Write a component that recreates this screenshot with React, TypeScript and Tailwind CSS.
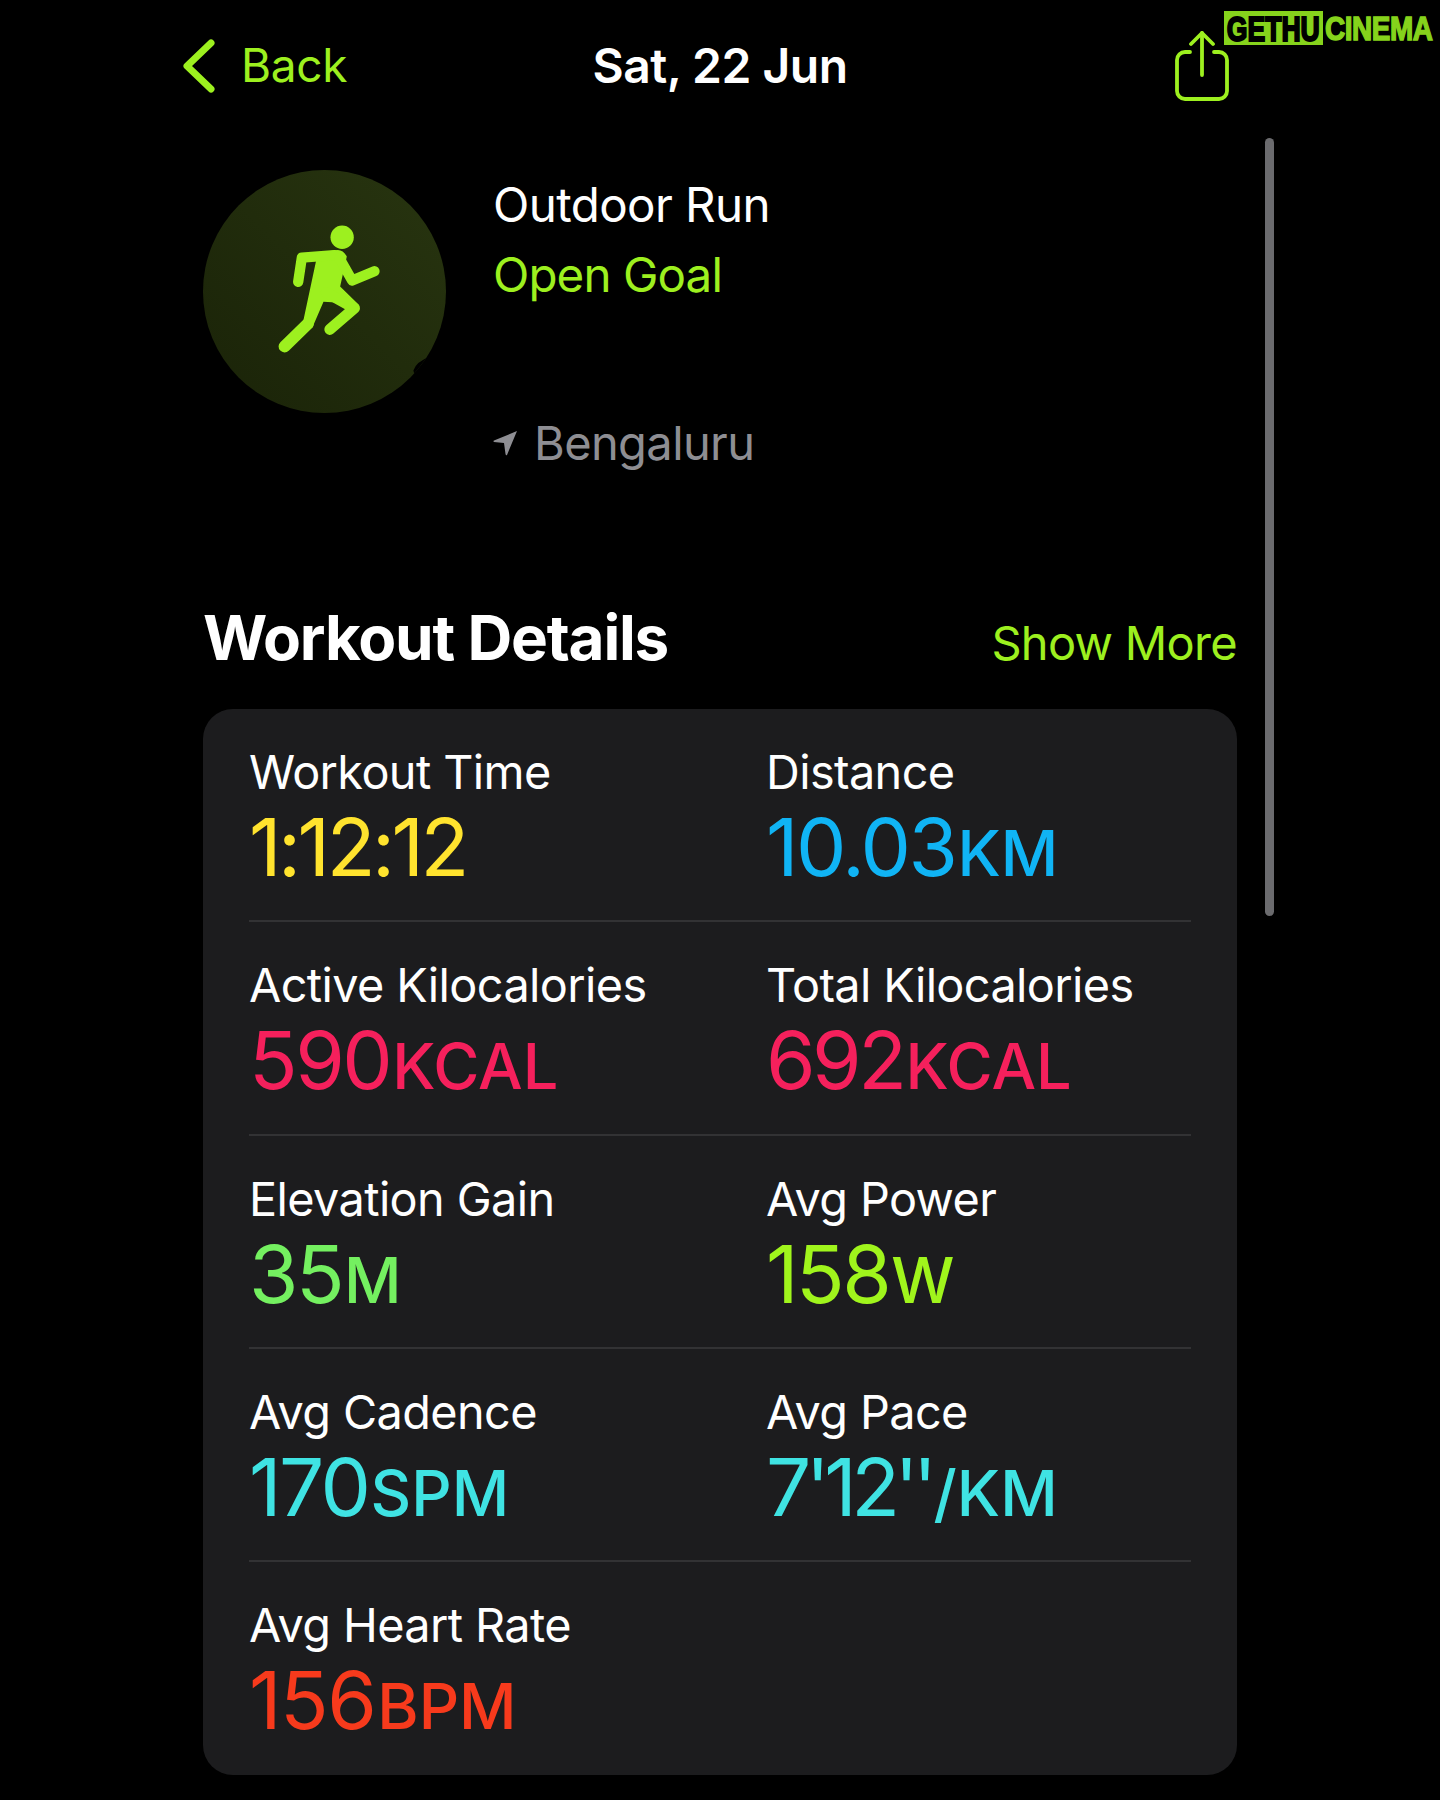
import React from 'react';

const LIME = '#9df01f';

interface Stat {
  label: string;
  value: string;
  unit?: string;
  color: string;
  tracking?: string;
}

const rows: Stat[][] = [
  [
    { label: 'Workout Time', value: '1:12:12', color: 'text-[#ffe32e]', tracking: 'tracking-[-3.5px]' },
    { label: 'Distance', value: '10.03', unit: 'KM', color: 'text-[#10b4f5]' },
  ],
  [
    { label: 'Active Kilocalories', value: '590', unit: 'KCAL', color: 'text-[#f5205c]' },
    { label: 'Total Kilocalories', value: '692', unit: 'KCAL', color: 'text-[#f5205c]', tracking: 'tracking-[-3.5px]' },
  ],
  [
    { label: 'Elevation Gain', value: '35', unit: 'M', color: 'text-[#74f060]' },
    { label: 'Avg Power', value: '158', unit: 'W', color: 'text-[#a0f51c]' },
  ],
  [
    { label: 'Avg Cadence', value: '170', unit: 'SPM', color: 'text-[#3fe3e3]' },
    { label: 'Avg Pace', value: "7'12''", unit: '/KM', color: 'text-[#3fe3e3]', tracking: 'tracking-[-5.5px]' },
  ],
  [{ label: 'Avg Heart Rate', value: '156', unit: 'BPM', color: 'text-[#f73a1c]', tracking: 'tracking-[-1.5px]' }],
];

function StatCell({ stat }: { stat: Stat }) {
  return (
    <div className="flex flex-col">
      <span className="text-[46.800px] leading-[54px] tracking-[-0.6px] text-white">{stat.label}</span>
      <span className={`mt-[5px] flex items-baseline leading-[86px] ${stat.color}`}>
        <span className={`text-[80px] font-normal ${stat.tracking ?? 'tracking-[-2.5px]'}`}>{stat.value}</span>
        {stat.unit && <span className="ml-[2px] text-[63px] font-medium tracking-[0px]">{stat.unit}</span>}
      </span>
    </div>
  );
}

function Runner() {
  return (
    <svg viewBox="40 30 730 730" className="h-full w-full">
      <path d="M672 632 Q680 606 722 590 L770 570 L770 700 L690 700 Z" fill="#000" />
      <circle cx="458" cy="232" r="35" fill={LIME} />
      <path d="M385 278 L445 270 Q462 270 472 290 L452 380 L505 432 L402 426 L368 505 L342 480 Z" fill={LIME} />
      <g fill="none" stroke={LIME} strokeLinecap="round" strokeLinejoin="round">
        <path d="M435 286 L337 293 L326 366" strokeWidth="31" />
        <path d="M450 295 L488 362 L555 334" strokeWidth="31" />
        <path d="M410 398 L495 445 L421 509" strokeWidth="33" />
        <path d="M355 492 L285 560" strokeWidth="36" />
      </g>
    </svg>
  );
}

export default function App() {
  return (
    <div className="relative h-[1800px] w-[1440px] overflow-hidden bg-black font-['Inter',sans-serif]">
      {/* top bar */}
      <header className="grid h-[136px] grid-cols-[1fr_auto_1fr] items-center px-[183px] pb-[5px]">
        <div className="flex items-center gap-[26px] text-[#9df01f]">
          <svg viewBox="0 0 32 54" className="h-[54px] w-[32px]" fill="none" stroke="currentColor" strokeWidth="7" strokeLinecap="round" strokeLinejoin="round">
            <path d="M28 4 L4 27 L28 50" />
          </svg>
          <span className="text-[46px] tracking-[-0.3px]">Back</span>
        </div>
        <div className="whitespace-nowrap text-center text-[48px] font-semibold tracking-[-0.5px] text-white">Sat, 22 Jun</div>
        <div className="flex justify-end pr-[28px]">
          <svg viewBox="0 0 54 70" className="h-[70px] w-[54px]" fill="none" stroke="#9df01f" strokeWidth="3.8" strokeLinecap="round" strokeLinejoin="round">
            <path d="M15 21 H10 A8 8 0 0 0 2 29 V60 A8 8 0 0 0 10 68 H44 A8 8 0 0 0 52 60 V29 A8 8 0 0 0 44 21 H39" />
            <path d="M27 2 V44" />
            <path d="M16 13 L27 2 L38 13" />
          </svg>
        </div>
      </header>

      <main className="ml-[203px] w-[1034px]">
        <section className="mt-[34px] flex h-[243px]">
          <div className="h-[243px] w-[243px] overflow-hidden rounded-full bg-gradient-to-tr from-[#1a2308] to-[#283510]">
            <Runner />
          </div>
          <div className="ml-[47px] flex flex-col">
            <span className="mt-[7px] text-[47.500px] leading-[56px] tracking-[-0.6px] text-white">Outdoor Run</span>
            <span className="mt-[14px] text-[47.500px] leading-[56px] tracking-[-0.9px] text-[#9df01f]">Open Goal</span>
            <div className="mt-[112px] flex items-center gap-[17px]">
              <svg viewBox="0 0 24 26" className="h-[26px] w-[24px]" fill="#8e8e93">
                <path d="M24 1 L14 25 Q13 26 12.500 24 L11 13 L1 12 Q0 11 1 10.500 Z" />
              </svg>
              <span className="text-[47px] leading-[56px] tracking-[-0.6px] text-[#8e8e93]">Bengaluru</span>
            </div>
          </div>
        </section>

        {/* workout details */}
        <div className="mt-[190px] flex items-baseline justify-between">
          <h2 className="text-[62px] font-bold leading-[70px] tracking-[-1.2px] text-white">Workout Details</h2>
          <span className="text-[47px] leading-[70px] tracking-[-0.7px] text-[#9df01f]">Show More</span>
        </div>

        <div className="mt-[31px] rounded-[30px] bg-[#1c1c1e] px-[46px]">
          {rows.map((row, i) => (
            <div
              key={row[0].label}
              className={`grid h-[213.3px] grid-cols-[517px_1fr] pt-[36px] ${i < rows.length - 1 ? 'border-b-2 border-[#323234]' : ''}`}
            >
              {row.map((stat) => (
                <StatCell key={stat.label} stat={stat} />
              ))}
            </div>
          ))}
        </div>
      </main>

      {/* scrollbar */}
      <div className="absolute left-[1265px] top-[138px] h-[778px] w-[9px] rounded-full bg-[#6b6b6e]" />

      {/* watermark */}
      <div className="absolute left-[1224px] top-[11px] flex h-[34px] items-center font-['Liberation_Sans',sans-serif] font-bold leading-none">
        <span className="flex h-[34px] w-[99px] items-center justify-center bg-[#86d31c] text-black">
          <span className="scale-x-[0.76] text-[35px] [-webkit-text-stroke:2px_#000]">GETHU</span>
        </span>
        <span className="ml-[2px] w-[110px] origin-left scale-x-[0.82] text-[34px] tracking-[-0.5px] text-[#86d31c] [-webkit-text-stroke:1.5px_#86d31c]">CINEMA</span>
      </div>
    </div>
  );
}
